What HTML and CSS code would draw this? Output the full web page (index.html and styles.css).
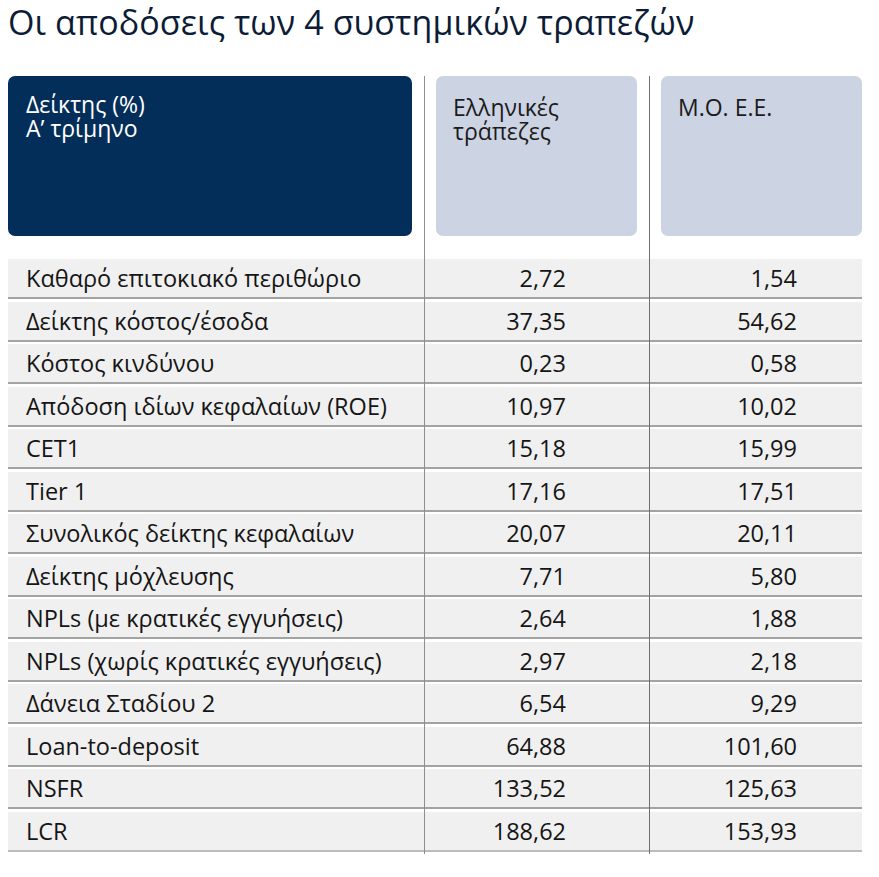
FILE: index.html
```html
<!DOCTYPE html>
<html lang="el">
<head>
<meta charset="utf-8">
<title>Οι αποδόσεις των 4 συστημικών τραπεζών</title>
<link rel="stylesheet" href="styles.css">
</head>
<body>
<div class="page">
  <h1 class="title">Οι αποδόσεις των 4 συστημικών τραπεζών</h1>
  <div class="table">
    <div class="hcell c1"><div class="card navy">Δείκτης (%)<br>Α’ τρίμηνο</div></div>
    <div class="hcell c2"><div class="card light">Ελληνικές<br>τράπεζες</div></div>
    <div class="hcell c3"><div class="card light">Μ.Ο. Ε.Ε.</div></div>

    <div class="cell c1"><div class="bg label">Καθαρό επιτοκιακό περιθώριο</div></div>
    <div class="cell c2"><div class="bg num">2,72</div></div>
    <div class="cell c3"><div class="bg num">1,54</div></div>

    <div class="cell c1"><div class="bg label">Δείκτης κόστος/έσοδα</div></div>
    <div class="cell c2"><div class="bg num">37,35</div></div>
    <div class="cell c3"><div class="bg num">54,62</div></div>

    <div class="cell c1"><div class="bg label">Κόστος κινδύνου</div></div>
    <div class="cell c2"><div class="bg num">0,23</div></div>
    <div class="cell c3"><div class="bg num">0,58</div></div>

    <div class="cell c1"><div class="bg label">Απόδοση ιδίων κεφαλαίων (ROE)</div></div>
    <div class="cell c2"><div class="bg num">10,97</div></div>
    <div class="cell c3"><div class="bg num">10,02</div></div>

    <div class="cell c1"><div class="bg label">CET1</div></div>
    <div class="cell c2"><div class="bg num">15,18</div></div>
    <div class="cell c3"><div class="bg num">15,99</div></div>

    <div class="cell c1"><div class="bg label">Tier 1</div></div>
    <div class="cell c2"><div class="bg num">17,16</div></div>
    <div class="cell c3"><div class="bg num">17,51</div></div>

    <div class="cell c1"><div class="bg label">Συνολικός δείκτης κεφαλαίων</div></div>
    <div class="cell c2"><div class="bg num">20,07</div></div>
    <div class="cell c3"><div class="bg num">20,11</div></div>

    <div class="cell c1"><div class="bg label">Δείκτης μόχλευσης</div></div>
    <div class="cell c2"><div class="bg num">7,71</div></div>
    <div class="cell c3"><div class="bg num">5,80</div></div>

    <div class="cell c1"><div class="bg label">NPLs (με κρατικές εγγυήσεις)</div></div>
    <div class="cell c2"><div class="bg num">2,64</div></div>
    <div class="cell c3"><div class="bg num">1,88</div></div>

    <div class="cell c1"><div class="bg label">NPLs (χωρίς κρατικές εγγυήσεις)</div></div>
    <div class="cell c2"><div class="bg num">2,97</div></div>
    <div class="cell c3"><div class="bg num">2,18</div></div>

    <div class="cell c1"><div class="bg label">Δάνεια Σταδίου 2</div></div>
    <div class="cell c2"><div class="bg num">6,54</div></div>
    <div class="cell c3"><div class="bg num">9,29</div></div>

    <div class="cell c1"><div class="bg label">Loan-to-deposit</div></div>
    <div class="cell c2"><div class="bg num">64,88</div></div>
    <div class="cell c3"><div class="bg num">101,60</div></div>

    <div class="cell c1"><div class="bg label">NSFR</div></div>
    <div class="cell c2"><div class="bg num">133,52</div></div>
    <div class="cell c3"><div class="bg num">125,63</div></div>

    <div class="cell c1 last"><div class="bg label">LCR</div></div>
    <div class="cell c2 last"><div class="bg num">188,62</div></div>
    <div class="cell c3 last"><div class="bg num">153,93</div></div>
  </div>
</div>
</body>
</html>
```

FILE: styles.css
```css
html, body {
  margin: 0;
  padding: 0;
  background: #ffffff;
}

.page {
  padding: 0 8px;
  font-family: "Open Sans", "Noto Sans", sans-serif;
  color: #151515;
}

.title {
  margin: 0;
  font-size: 34px;
  line-height: 44px;
  font-weight: 400;
  color: #0c1c36;
  letter-spacing: 0.1px;
}

.table {
  margin-top: 32px;
  display: grid;
  grid-template-columns: 416px 225px 213px;
}

.hcell {
  padding-bottom: 23px;
}

.c2, .c3 {
  border-left: 1px solid #8e8e8e;
}

.c3 {
  border-left-color: #6f6f6f;
}

.card {
  height: 160px;
  box-sizing: border-box;
  border-radius: 7px;
  font-size: 23px;
  line-height: 24px;
}

.navy {
  background: #042e5a;
  color: #ffffff;
  margin-right: 12px;
  padding: 16px 18px;
}

.light {
  background: #ccd3e3;
  color: #1b1b1b;
  margin: 0 12px 0 11px;
  padding: 19px 17px;
}

.c3 .light {
  margin-right: 0;
}

.cell {
  padding-bottom: 2.5px;
}

.bg {
  height: 37px;
  padding-top: 1px;
  background: #f0f0f0;
  border-bottom: 2px solid #a3a3a3;
  font-size: 23.5px;
  line-height: 37px;
  color: #151515;
  white-space: nowrap;
}

.last .bg {
  border-bottom-color: #bcbcbc;
}

.label {
  padding-left: 18px;
}

.num {
  text-align: right;
}

.c2 .num {
  padding-right: 83px;
}

.c3 .num {
  padding-right: 65px;
}
```
